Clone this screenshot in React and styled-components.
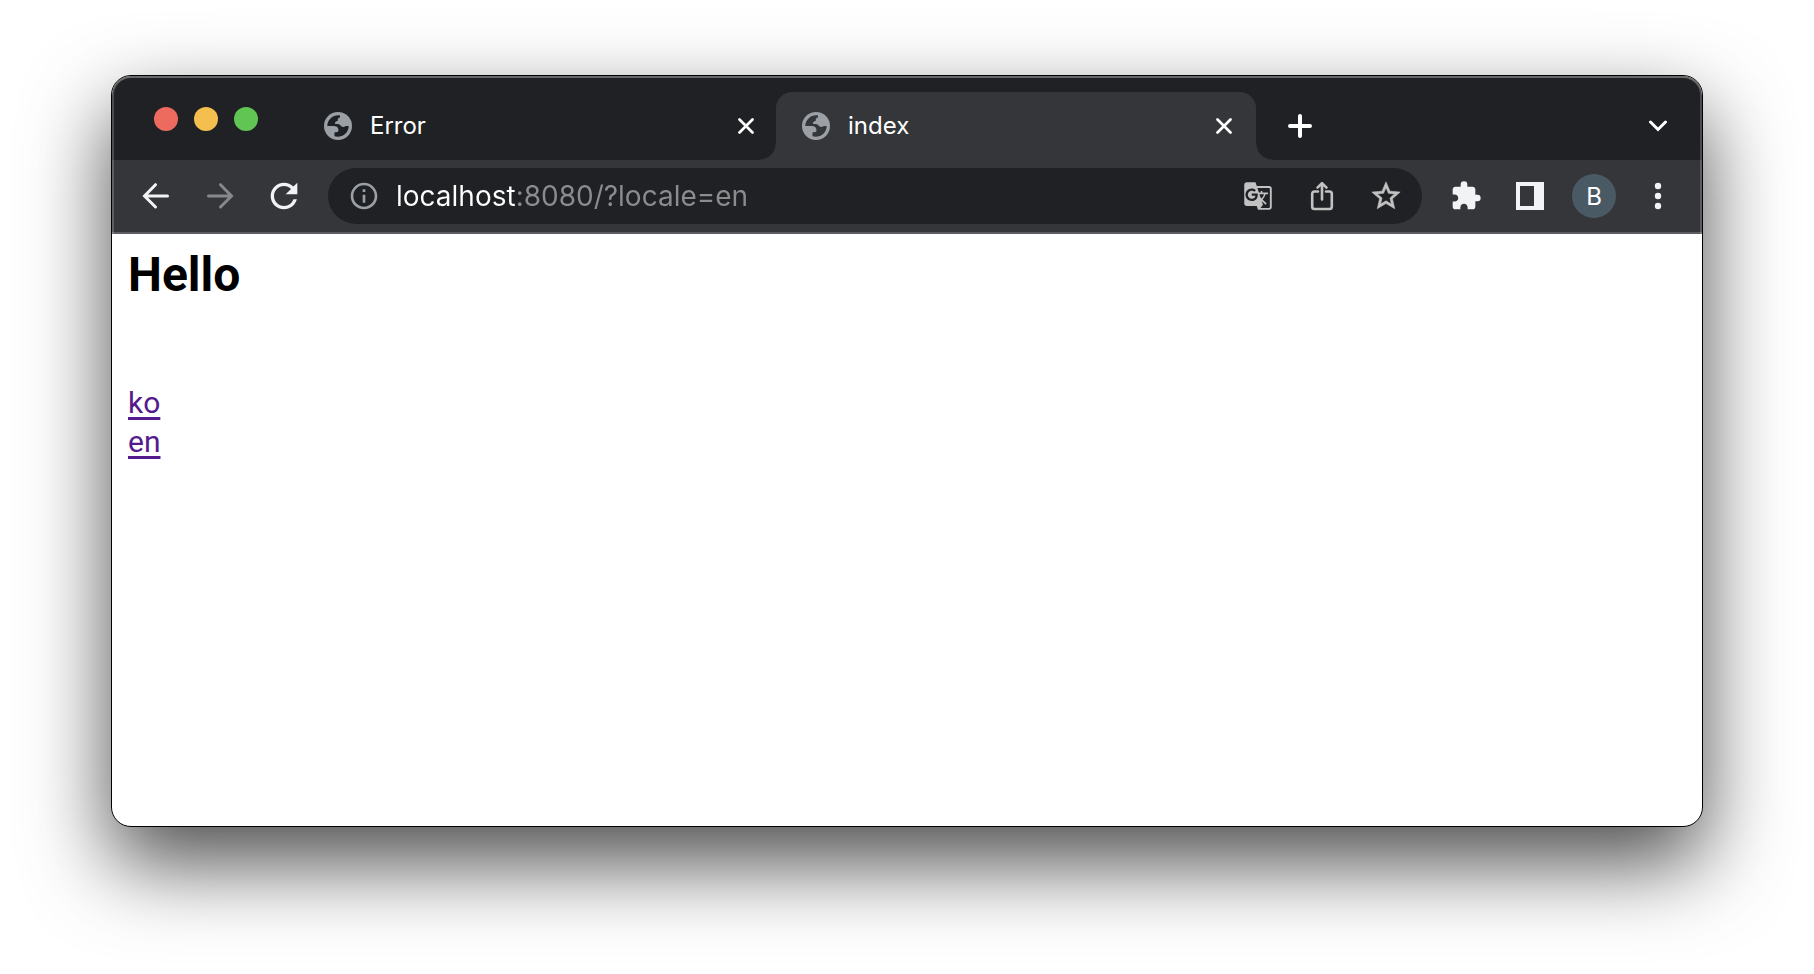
import React from 'react';
import styled, { createGlobalStyle } from 'styled-components';
import { MdExtension, MdRefresh, MdInfoOutline, MdGTranslate } from 'react-icons/md';

const GlobalStyle = createGlobalStyle`
  *, *::before, *::after { box-sizing: border-box; }
  body { margin: 0; background: #fff; font-family: Inter, "Liberation Sans", sans-serif; }
  button { border: 0; padding: 0; background: none; color: inherit; font: inherit; cursor: pointer; }
  svg { display: block; }
`;

const Desktop = styled.div`
  display: flex;
  min-height: 100vh;
  padding: 75px 111px 147px;
`;

const BrowserWindow = styled.div`
  position: relative;
  flex: 1;
  min-width: 0;
  display: flex;
  flex-direction: column;
  border: 1px solid #000;
  border-radius: 20px;
  background: #fff;
  box-shadow: 0 36px 84px rgba(0, 0, 0, 0.7);

  &::after {
    content: "";
    position: absolute;
    inset: 0;
    border-radius: 19px;
    box-shadow: inset 0 0 0 2px rgba(255, 255, 255, 0.2), inset 0 2px 0 rgba(255, 255, 255, 0.16);
    pointer-events: none;
  }
`;

const TabStrip = styled.header`
  display: flex;
  height: 84px;
  padding: 0 24px 0 42px;
  border-radius: 19px 19px 0 0;
  background: #202124;
  color: #fff;
`;

const TrafficLights = styled.div`
  display: flex;
  align-items: center;
  gap: 16px;
  padding-top: 2px;
  margin-right: 40px;
`;

const Light = styled.button`
  width: 24px;
  height: 24px;
  border-radius: 50%;
  && { background: ${({ $color }) => $color}; }
`;

const TabRow = styled.div`
  flex: 1;
  min-width: 0;
  display: flex;
  align-items: center;
  margin-top: 16px;
`;

const Tab = styled.div`
  position: relative;
  flex: 0 1 480px;
  min-width: 0;
  height: 68px;
  display: flex;
  align-items: center;
  gap: 18px;
  padding: 0 20px 0 26px;
  border-radius: 16px 16px 0 0;
  background: ${({ $active }) => ($active ? '#35363a' : 'transparent')};

  & + & { margin-left: -2px; }

  &::before,
  &::after {
    content: "";
    display: ${({ $active }) => ($active ? 'block' : 'none')};
    position: absolute;
    bottom: 0;
    width: 16px;
    height: 16px;
  }
  &::before {
    right: 100%;
    background: radial-gradient(circle at 0 0, transparent 15px, #35363a 16px);
  }
  &::after {
    left: 100%;
    background: radial-gradient(circle at 100% 0, transparent 15px, #35363a 16px);
  }
`;

const TabTitle = styled.span`
  flex: 1;
  min-width: 0;
  overflow: hidden;
  white-space: nowrap;
  font-size: 24px;
  line-height: 32px;
`;

const CloseButton = styled.button`
  width: 24px;
  height: 24px;
  display: grid;
  place-items: center;
`;

const IconButton = styled.button`
  flex: none;
  width: 40px;
  height: 40px;
  display: grid;
  place-items: center;
  && { color: ${({ $color }) => $color || '#f1f3f4'}; }
`;

const NewTabButton = styled(IconButton)`
  margin-left: 24px;
  margin-right: auto;
`;

const Toolbar = styled.div`
  display: flex;
  align-items: center;
  gap: 24px;
  height: 74px;
  padding: 0 24px;
  border-bottom: 2px solid #5d5e62;
  background: #35363a;
`;

const AddressBar = styled.form`
  flex: 1;
  min-width: 0;
  height: 56px;
  display: flex;
  align-items: center;
  gap: 24px;
  padding: 0 16px;
  border-radius: 28px;
  background: #202124;
`;

const AddressField = styled.label`
  flex: 1;
  min-width: 0;
  margin-left: -12px;
`;

const AddressInput = styled.input`
  display: block;
  width: 100%;
  height: 40px;
  padding: 0;
  border: 0;
  outline: 0;
  font: 28px Inter, "Liberation Sans", sans-serif;
  color: transparent;
  caret-color: #fff;
  background: linear-gradient(90deg, #fff 120px, #8b8c8e 120px);
  background-clip: text;
  -webkit-background-clip: text;
`;

const Avatar = styled.button`
  flex: none;
  width: 44px;
  height: 44px;
  margin: 0 -2px;
  border-radius: 50%;
  && { background: #4a5a64; color: #fff; font-size: 24px; }
`;

const Page = styled.main`
  flex: 1;
  padding: 16px;
  font-family: Roboto, "Liberation Sans", sans-serif;
`;

const Heading = styled.h2`
  margin: 0 0 83px;
  font-size: 48px;
  line-height: 50px;
  font-weight: 700;
  color: #000;
`;

const LocaleLine = styled.div`
  font-size: 30px;
  line-height: 39px;
`;

const LocaleLink = styled.a`
  color: #551a8b;
  text-decoration: underline;
  text-decoration-thickness: 3px;
  text-underline-offset: 4px;
  text-decoration-skip-ink: none;
`;

const Globe = ({ land }) => (
  <svg width="28" height="28" viewBox="0 0 28 28" aria-hidden="true">
    <circle cx="14" cy="14" r="14" fill="#9aa0a6" />
    <path
      fill={land}
      d="M16 3.4C9.2 2.4 3.4 7.6 3.3 14H9.5C12.7 14 14.5 15.6 14.5 18.2C14.5 19.8 13.4 20.3 10.5 20.3V24.2C17.5 26.2 24.7 21.5 24.7 14H21.6C20.6 15.2 18.4 15.3 17.3 14.2C16.3 13.2 15.5 12 13.8 12H11C11 9.8 11.7 9 13.7 9C13.7 6.8 14.2 5.7 16 5.5Z"
    />
  </svg>
);

const Cross = () => (
  <svg width="16" height="16" viewBox="0 0 16 16" fill="none" stroke="#fff" strokeWidth="2.7" strokeLinecap="round" aria-hidden="true">
    <path d="M1.5 1.5 14.5 14.5M14.5 1.5 1.5 14.5" />
  </svg>
);

const Plus = () => (
  <svg width="24" height="24" viewBox="0 0 24 24" fill="none" stroke="#fff" strokeWidth="4" strokeLinecap="round" aria-hidden="true">
    <path d="M12 2V22M2 12H22" />
  </svg>
);

const Chevron = () => (
  <svg width="20" height="12" viewBox="0 0 20 12" fill="none" stroke="#fff" strokeWidth="3" strokeLinecap="round" aria-hidden="true">
    <path d="M2.5 2 10 9.5 17.5 2" />
  </svg>
);

const Arrow = ({ forward }) => (
  <svg width="28" height="28" viewBox="0 0 28 28" fill="none" stroke="currentColor" strokeWidth="3" strokeLinecap="round" aria-hidden="true">
    <path d={forward ? 'M2.5 14H25M14.5 2.7 25.5 14 14.5 25' : 'M25.5 14H3M13.5 2.7 2.5 14 13.5 25'} />
  </svg>
);

const Share = () => (
  <svg width="24" height="30" viewBox="0 0 24 30" fill="none" stroke="currentColor" strokeWidth="2.6" strokeLinecap="round" strokeLinejoin="round" aria-hidden="true">
    <path d="M8 10.5H4.5Q2.2 10.5 2.2 12.8V25.8Q2.2 28 4.5 28H19.5Q21.8 28 21.8 25.8V12.8Q21.8 10.5 19.5 10.5H16" />
    <path d="M12 18.5V2.5M7.5 6.7 12 2.2 16.5 6.7" />
  </svg>
);

const Star = () => (
  <svg width="34" height="34" viewBox="0 0 24 24" fill="currentColor" stroke="currentColor" strokeWidth="0.4" aria-hidden="true">
    <path d="M22 9.24l-7.19-.62L12 2 9.19 8.63 2 9.24l5.46 4.73L5.82 21 12 17.27 18.18 21l-1.63-7.03L22 9.24zM12 15.4l-3.76 2.27 1-4.28-3.32-2.88 4.38-.38L12 6.1l1.71 4.04 4.38.38-3.32 2.88 1 4.28L12 15.4z" />
  </svg>
);

const SidePanel = () => (
  <svg width="28" height="28" viewBox="0 0 28 28" fill="currentColor" fillRule="evenodd" aria-hidden="true">
    <path d="M0 0H28V28H0ZM4 4V24H18V4Z" />
  </svg>
);

const Dots = () => (
  <svg width="8" height="28" viewBox="0 0 8 28" fill="currentColor" aria-hidden="true">
    <circle cx="4" cy="4" r="3.2" />
    <circle cx="4" cy="14" r="3.2" />
    <circle cx="4" cy="24" r="3.2" />
  </svg>
);

const tabs = [{ title: 'Error' }, { title: 'index', active: true }];
const locales = ['ko', 'en'];

export default function App() {
  return (
    <>
      <GlobalStyle />
      <Desktop>
        <BrowserWindow>
          <TabStrip>
            <TrafficLights>
              <Light $color="#ed6a5e" aria-label="Close window" />
              <Light $color="#f5bf4f" aria-label="Minimize window" />
              <Light $color="#61c554" aria-label="Zoom window" />
            </TrafficLights>
            <TabRow>
              {tabs.map(({ title, active }) => (
                <Tab key={title} $active={active}>
                  <Globe land={active ? '#35363a' : '#202124'} />
                  <TabTitle>{title}</TabTitle>
                  <CloseButton aria-label={`Close ${title}`}><Cross /></CloseButton>
                </Tab>
              ))}
              <NewTabButton aria-label="New tab"><Plus /></NewTabButton>
              <IconButton aria-label="Search tabs"><Chevron /></IconButton>
            </TabRow>
          </TabStrip>
          <Toolbar>
            <IconButton aria-label="Back"><Arrow /></IconButton>
            <IconButton aria-label="Forward" $color="#87888a"><Arrow forward /></IconButton>
            <IconButton aria-label="Reload"><MdRefresh size={40} /></IconButton>
            <AddressBar onSubmit={(e) => e.preventDefault()}>
              <IconButton type="button" aria-label="Site information" $color="#9aa0a6"><MdInfoOutline size={32} /></IconButton>
              <AddressField>
                <AddressInput aria-label="Address" defaultValue="localhost:8080/?locale=en" spellCheck={false} />
              </AddressField>
              <IconButton type="button" aria-label="Translate" $color="#c2c2c2"><MdGTranslate size={30} /></IconButton>
              <IconButton type="button" aria-label="Share" $color="#c2c2c2"><Share /></IconButton>
              <IconButton type="button" aria-label="Bookmark" $color="#c2c2c2"><Star /></IconButton>
            </AddressBar>
            <IconButton aria-label="Extensions"><MdExtension size={32} /></IconButton>
            <IconButton aria-label="Side panel"><SidePanel /></IconButton>
            <Avatar aria-label="Profile B">B</Avatar>
            <IconButton aria-label="Menu"><Dots /></IconButton>
          </Toolbar>
          <Page>
            <Heading>Hello</Heading>
            {locales.map((locale) => (
              <LocaleLine key={locale}>
                <LocaleLink href={`?locale=${locale}`}>{locale}</LocaleLink>
              </LocaleLine>
            ))}
          </Page>
        </BrowserWindow>
      </Desktop>
    </>
  );
}
